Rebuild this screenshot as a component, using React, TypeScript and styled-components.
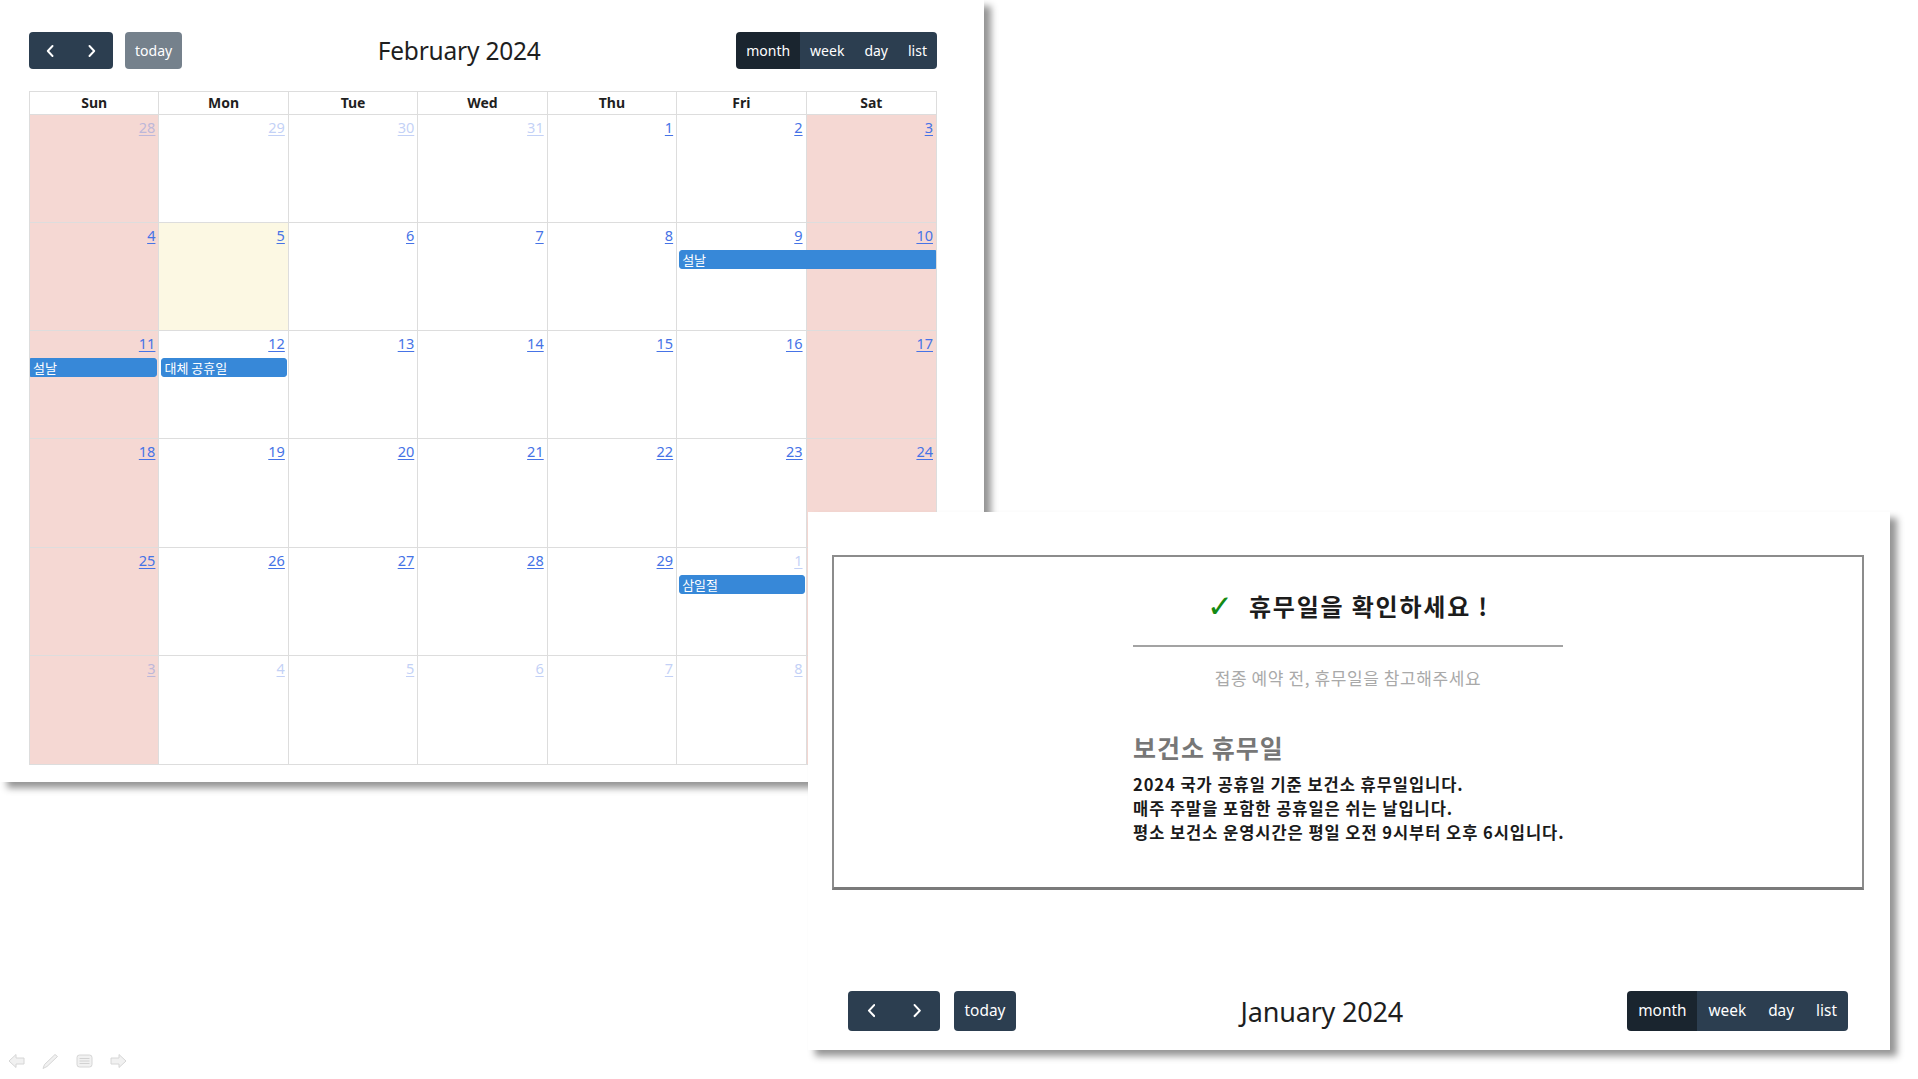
import React from "react";
import styled, { createGlobalStyle } from "styled-components";

const GlobalStyle = createGlobalStyle`
  html, body { margin: 0; padding: 0; background: #ffffff; }
  body { font-family: "Noto Sans", "Noto Sans CJK KR", sans-serif; }
  * { box-sizing: border-box; }
`;

const Slide = styled.div`
  position: relative;
  width: 1918px;
  height: 1079px;
  overflow: hidden;
  background: #ffffff;
`;

const Window = styled.section<{ $left: number; $top: number; $w: number; $h: number; $pad: string }>`
  position: absolute;
  left: ${(p) => p.$left}px;
  top: ${(p) => p.$top}px;
  width: ${(p) => p.$w}px;
  height: ${(p) => p.$h}px;
  padding: ${(p) => p.$pad};
  background: #ffffff;
  box-shadow: 7px 6px 7px rgba(0, 0, 0, 0.42);
  display: flex;
  flex-direction: column;
`;

/* ---------- toolbar ---------- */

const Toolbar = styled.div<{ $h: number; $mb?: number; $mt?: number; $ml?: number; $mr?: number }>`
  display: flex;
  justify-content: space-between;
  align-items: center;
  height: ${(p) => p.$h}px;
  margin: ${(p) => p.$mt ?? 0}px ${(p) => p.$mr ?? 0}px ${(p) => p.$mb ?? 0}px ${(p) => p.$ml ?? 0}px;
  flex-shrink: 0;
`;

const Chunk = styled.div<{ $gap: number }>`
  display: flex;
  align-items: center;
  gap: ${(p) => p.$gap}px;
  height: 100%;
`;

const BtnGroup = styled.div`
  display: flex;
  height: 100%;
  border-radius: 4px;
  overflow: hidden;
`;

const Btn = styled.button<{ $s: number; $active?: boolean; $disabled?: boolean; $w?: number }>`
  height: 100%;
  ${(p) => (p.$w ? `width: ${p.$w}px;` : "")}
  padding: 0 ${(p) => 10 * p.$s}px;
  border: none;
  margin: 0;
  background: ${(p) => (p.$active ? "#1a252f" : "#2c3e50")};
  color: #ffffff;
  font-family: "Noto Sans", sans-serif;
  font-size: ${(p) => 14 * p.$s}px;
  line-height: 1;
  display: flex;
  align-items: center;
  justify-content: center;
  opacity: ${(p) => (p.$disabled ? 0.65 : 1)};
`;

const SoloBtn = styled(Btn)`
  border-radius: 4px;
`;

const Title = styled.h2<{ $size: number }>`
  margin: 0;
  font-family: "Noto Sans", sans-serif;
  font-weight: 400;
  font-size: ${(p) => p.$size}px;
  color: #1e1e1e;
  letter-spacing: -0.2px;
`;

const Chevron = ({ dir, s }: { dir: "l" | "r"; s: number }) => (
  <svg width={8 * s} height={12 * s} viewBox="0 0 8 12">
    <polyline
      points={dir === "l" ? "6.5,1 1.8,6 6.5,11" : "1.5,1 6.2,6 1.5,11"}
      fill="none"
      stroke="#ffffff"
      strokeWidth="1.9"
      strokeLinecap="round"
      strokeLinejoin="round"
    />
  </svg>
);

const CalToolbar = ({
  s,
  h,
  title,
  todayDisabled,
  titleSize,
  mb,
  mt,
  ml,
  mr,
}: {
  s: number;
  h: number;
  title: string;
  todayDisabled: boolean;
  titleSize: number;
  mb?: number;
  mt?: number;
  ml?: number;
  mr?: number;
}) => (
  <Toolbar $h={h} $mb={mb} $mt={mt} $ml={ml} $mr={mr}>
    <Chunk $gap={12 * s}>
      <BtnGroup>
        <Btn $s={s} $w={42 * s}>
          <Chevron dir="l" s={s} />
        </Btn>
        <Btn $s={s} $w={42 * s}>
          <Chevron dir="r" s={s} />
        </Btn>
      </BtnGroup>
      <SoloBtn $s={s} $disabled={todayDisabled}>
        today
      </SoloBtn>
    </Chunk>
    <Title $size={titleSize}>{title}</Title>
    <Chunk $gap={0}>
      <BtnGroup>
        <Btn $s={s} $active>
          month
        </Btn>
        <Btn $s={s}>week</Btn>
        <Btn $s={s}>day</Btn>
        <Btn $s={s}>list</Btn>
      </BtnGroup>
    </Chunk>
  </Toolbar>
);

/* ---------- month grid ---------- */

const Grid = styled.div`
  display: grid;
  grid-template-rows: 23px repeat(6, 1fr);
  width: 908px;
  height: 674px;
  border: 1px solid #dddddd;
`;

const HeadRow = styled.div`
  display: grid;
  grid-template-columns: repeat(7, 1fr);
  border-bottom: 1px solid #dddddd;
`;

const HeadCell = styled.div<{ $last?: boolean }>`
  border-right: ${(p) => (p.$last ? "none" : "1px solid #dddddd")};
  text-align: center;
  font-family: "Noto Sans", sans-serif;
  font-weight: 700;
  font-size: 14px;
  line-height: 22px;
  color: #1f1f1f;
`;

const WeekRow = styled.div<{ $last?: boolean }>`
  display: grid;
  grid-template-columns: repeat(7, 1fr);
  grid-template-rows: 27px 19px 1fr;
  border-bottom: ${(p) => (p.$last ? "none" : "1px solid #dddddd")};
  min-height: 0;
`;

const DayCell = styled.div<{ $col: number; $kind: "weekend" | "today" | "plain" }>`
  grid-row: 1 / -1;
  grid-column: ${(p) => p.$col};
  background: ${(p) =>
    p.$kind === "weekend" ? "#f5d8d3" : p.$kind === "today" ? "#fcf8e3" : "#ffffff"};
  border-right: ${(p) => (p.$col === 7 ? "none" : "1px solid #dddddd")};
  text-align: right;
  padding: 1px 3px 0 0;
`;

const DayNum = styled.span<{ $other?: boolean }>`
  font-family: "Noto Sans", sans-serif;
  font-size: 14.5px;
  line-height: 20px;
  color: #4673e6;
  text-decoration: underline;
  text-underline-offset: 2px;
  opacity: ${(p) => (p.$other ? 0.32 : 1)};
`;

const EventBar = styled.div<{ $col: number; $span: number; $starts: boolean; $ends: boolean }>`
  grid-row: 2;
  grid-column: ${(p) => p.$col} / span ${(p) => p.$span};
  z-index: 1;
  margin-left: ${(p) => (p.$starts ? 2 : 0)}px;
  margin-right: ${(p) => (p.$ends ? 2 : 0)}px;
  background: #3788d8;
  border: 1px solid #3788d8;
  border-radius: ${(p) =>
    `${p.$starts ? 3 : 0}px ${p.$ends ? 3 : 0}px ${p.$ends ? 3 : 0}px ${p.$starts ? 3 : 0}px`};
  color: #ffffff;
  font-family: "Noto Sans CJK KR", "Noto Sans", sans-serif;
  font-size: 13px;
  line-height: 17px;
  padding-left: 2px;
  white-space: nowrap;
  overflow: hidden;
`;

type Day = { d: number; o?: boolean; t?: boolean };
type Ev = { title: string; col: number; span: number; starts: boolean; ends: boolean };

const weeks: { days: Day[]; events: Ev[] }[] = [
  {
    days: [{ d: 28, o: true }, { d: 29, o: true }, { d: 30, o: true }, { d: 31, o: true }, { d: 1 }, { d: 2 }, { d: 3 }],
    events: [],
  },
  {
    days: [{ d: 4 }, { d: 5, t: true }, { d: 6 }, { d: 7 }, { d: 8 }, { d: 9 }, { d: 10 }],
    events: [{ title: "설날", col: 6, span: 2, starts: true, ends: false }],
  },
  {
    days: [{ d: 11 }, { d: 12 }, { d: 13 }, { d: 14 }, { d: 15 }, { d: 16 }, { d: 17 }],
    events: [
      { title: "설날", col: 1, span: 1, starts: false, ends: true },
      { title: "대체 공휴일", col: 2, span: 1, starts: true, ends: true },
    ],
  },
  {
    days: [{ d: 18 }, { d: 19 }, { d: 20 }, { d: 21 }, { d: 22 }, { d: 23 }, { d: 24 }],
    events: [],
  },
  {
    days: [{ d: 25 }, { d: 26 }, { d: 27 }, { d: 28 }, { d: 29 }, { d: 1, o: true }, { d: 2, o: true }],
    events: [{ title: "삼일절", col: 6, span: 1, starts: true, ends: true }],
  },
  {
    days: [{ d: 3, o: true }, { d: 4, o: true }, { d: 5, o: true }, { d: 6, o: true }, { d: 7, o: true }, { d: 8, o: true }, { d: 9, o: true }],
    events: [],
  },
];

const dayNames = ["Sun", "Mon", "Tue", "Wed", "Thu", "Fri", "Sat"];

const MonthGrid = () => (
  <Grid>
    <HeadRow>
      {dayNames.map((n, i) => (
        <HeadCell key={n} $last={i === 6}>
          {n}
        </HeadCell>
      ))}
    </HeadRow>
    {weeks.map((w, wi) => (
      <WeekRow key={wi} $last={wi === weeks.length - 1}>
        {w.days.map((day, di) => (
          <DayCell
            key={di}
            $col={di + 1}
            $kind={di === 0 || di === 6 ? "weekend" : day.t ? "today" : "plain"}
          >
            <DayNum $other={day.o}>{day.d}</DayNum>
          </DayCell>
        ))}
        {w.events.map((e, ei) => (
          <EventBar key={ei} $col={e.col} $span={e.span} $starts={e.starts} $ends={e.ends}>
            {e.title}
          </EventBar>
        ))}
      </WeekRow>
    ))}
  </Grid>
);

/* ---------- notice box ---------- */

const Notice = styled.div`
  width: 1032px;
  height: 335px;
  border: 2px solid #8c8c8c;
  border-bottom-width: 3px;
  border-bottom-color: #7a7a7a;
  display: flex;
  flex-direction: column;
  align-items: center;
  padding-top: 33px;
  font-family: "Noto Sans CJK KR", "Noto Sans", sans-serif;
  flex-shrink: 0;
`;

const NoticeTitle = styled.h1`
  margin: 0;
  display: flex;
  align-items: center;
  gap: 16px;
  font-size: 24px;
  line-height: 32px;
  font-weight: 700;
  letter-spacing: 1.8px;
  color: #1c1c1c;
`;

const Check = styled.span`
  font-family: "DejaVu Sans", sans-serif;
  font-weight: 400;
  font-size: 31px;
  letter-spacing: 0;
  color: #148a14;
`;

const Rule = styled.hr`
  width: 430px;
  height: 2px;
  margin: 23px 0 0;
  border: none;
  background: #a3a3a3;
`;

const Sub = styled.p`
  margin: 19px 0 0;
  font-size: 17px;
  line-height: 24px;
  letter-spacing: 0.6px;
  color: #a9a9a9;
`;

const Info = styled.div`
  width: 430px;
  margin-top: 41px;
  display: flex;
  flex-direction: column;
`;

const InfoHead = styled.h3`
  margin: 0 0 9px;
  font-size: 25px;
  line-height: 32px;
  letter-spacing: 1px;
  font-weight: 700;
  color: #777777;
`;

const InfoLine = styled.p`
  margin: 0;
  font-size: 16.5px;
  line-height: 24px;
  letter-spacing: 0.95px;
  font-weight: 600;
  color: #1a1a1a;
  white-space: nowrap;
`;

/* ---------- slideshow controls ---------- */

const ShowControls = styled.div`
  position: absolute;
  left: 8px;
  bottom: 10px;
  display: flex;
  gap: 17px;
  align-items: center;
`;

const Controls = () => (
  <ShowControls>
    <svg width="17" height="16" viewBox="0 0 17 16">
      <polygon points="1,8 8,1.5 8,5 16,5 16,11 8,11 8,14.5" fill="#f1f1f1" stroke="#d6d6d6" strokeWidth="1" />
    </svg>
    <svg width="17" height="16" viewBox="0 0 17 16">
      <polygon points="1,15.5 2.5,11.5 13,1.5 15.5,3.5 5,13.5" fill="#f1f1f1" stroke="#d6d6d6" strokeWidth="1" />
    </svg>
    <svg width="17" height="16" viewBox="0 0 17 16">
      <rect x="1" y="2" width="15" height="12" rx="2.5" fill="#f1f1f1" stroke="#d6d6d6" />
      <line x1="3.5" y1="5.5" x2="13.5" y2="5.5" stroke="#d2d2d2" />
      <line x1="3.5" y1="8" x2="13.5" y2="8" stroke="#d2d2d2" />
      <line x1="3.5" y1="10.5" x2="13.5" y2="10.5" stroke="#d2d2d2" />
    </svg>
    <svg width="17" height="16" viewBox="0 0 17 16">
      <polygon points="16,8 9,1.5 9,5 1,5 1,11 9,11 9,14.5" fill="#f1f1f1" stroke="#d6d6d6" strokeWidth="1" />
    </svg>
  </ShowControls>
);

export default function App() {
  return (
    <>
      <GlobalStyle />
      <Slide>
        <Window $left={0} $top={0} $w={984} $h={782} $pad="32px 47px 0 29px">
          <CalToolbar s={1} h={37} title="February 2024" todayDisabled titleSize={24.5} mb={22} />
          <MonthGrid />
        </Window>
        <Window $left={808} $top={512} $w={1082} $h={538} $pad="43px 26px 0 24px">
          <Notice>
            <NoticeTitle>
              <Check>✓</Check>
              <span>휴무일을 확인하세요 !</span>
            </NoticeTitle>
            <Rule />
            <Sub>접종 예약 전, 휴무일을 참고해주세요</Sub>
            <Info>
              <InfoHead>보건소 휴무일</InfoHead>
              <InfoLine>2024 국가 공휴일 기준 보건소 휴무일입니다.</InfoLine>
              <InfoLine>매주 주말을 포함한 공휴일은 쉬는 날입니다.</InfoLine>
              <InfoLine>평소 보건소 운영시간은 평일 오전 9시부터 오후 6시입니다.</InfoLine>
            </Info>
          </Notice>
          <CalToolbar s={1.1} h={40} title="January 2024" todayDisabled={false} titleSize={27} mt={101} ml={16} mr={16} />
        </Window>
        <Controls />
      </Slide>
    </>
  );
}
